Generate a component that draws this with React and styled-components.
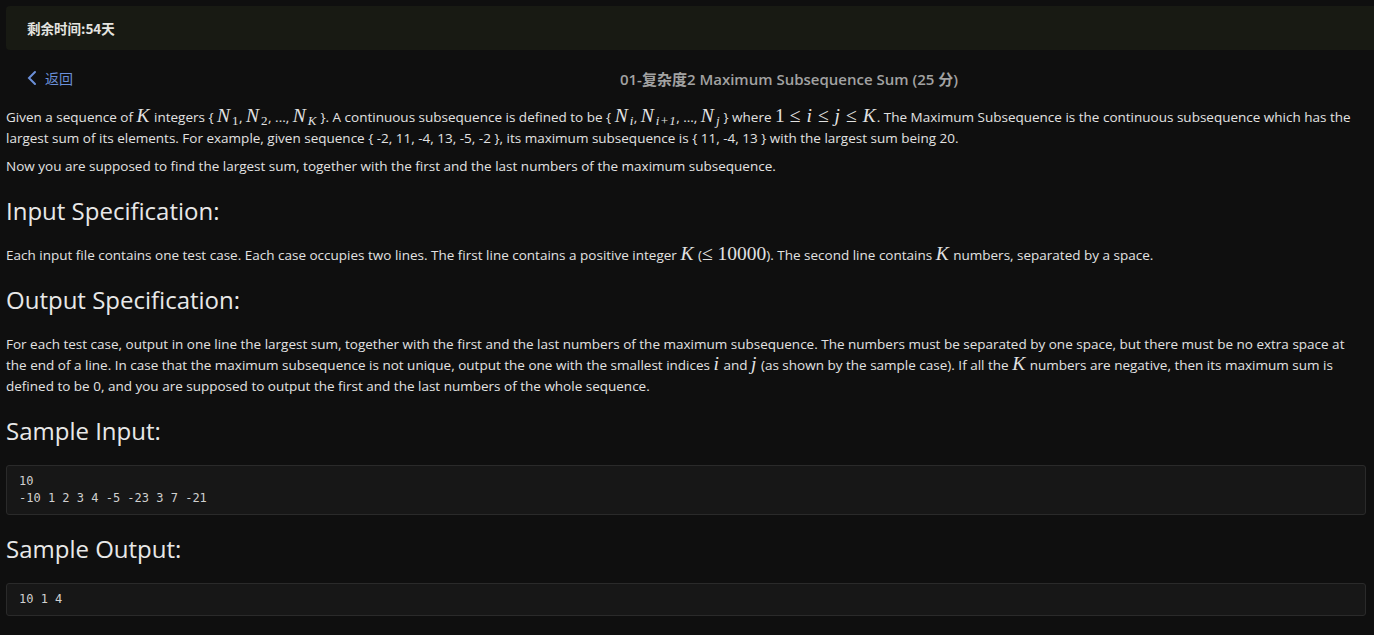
import React from "react";
import styled, { createGlobalStyle } from "styled-components";

const Global = createGlobalStyle`
  html, body { margin: 0; padding: 0; background: #0f0f0f; }
  body { font-family: "Open Sans", "Noto Sans", "Noto Sans CJK SC", sans-serif; color: #e2e2e2; }
  * { box-sizing: border-box; }
`;

const Page = styled.div`
  min-height: 635px;
  padding: 6px 0 20px 6px;
`;

const TopBar = styled.div`
  height: 44px;
  background: #181a13;
  border-radius: 4px 0 0 4px;
  display: flex;
  align-items: center;
  padding-left: 21px;
  font-size: 13.5px;
  font-weight: 600;
  color: #e4e4e0;
  font-family: "Noto Sans CJK SC", "Open Sans", sans-serif;
`;

const Content = styled.div`
  padding-right: 8px;
`;

const Header = styled.div`
  display: grid;
  grid-template-columns: 206px 1fr;
  align-items: center;
  height: 57px;
  padding-bottom: 1px;
`;

const Back = styled.a`
  display: flex;
  align-items: center;
  gap: 8px;
  padding-left: 21px;
  color: #6b8fd8;
  font-size: 14px;
  font-family: "Noto Sans CJK SC", sans-serif;
  text-decoration: none;
  cursor: pointer;
`;

const Title = styled.h1`
  margin: 0;
  text-align: center;
  font-size: 15px;
  font-weight: 600;
  color: #a2a2a2;
  font-family: "Open Sans", "Noto Sans CJK SC", sans-serif;
`;

const P = styled.p`
  margin: 0 0 7px;
  font-size: 13.5px;
  line-height: 21px;
`;

const H2 = styled.h2`
  margin: 17px 0 17px;
  font-size: 24px;
  line-height: 34px;
  font-weight: 400;
  color: #e8e8e8;
`;

const M = styled.span`
  font-family: "Liberation Serif", "DejaVu Serif", serif;
  font-style: ${(p) => (p.$up ? "normal" : "italic")};
  font-size: 19.5px;
  letter-spacing: ${(p) => (p.$up ? "0" : "1px")};
  line-height: 0;
`;

const Rel = styled.span`
  font-style: normal;
  margin: 0 5px;
`;

const Sub = styled.sub`
  font-size: 13px;
  letter-spacing: 0.5px;
  font-style: ${(p) => (p.$up ? "normal" : "italic")};
  line-height: 0;
  vertical-align: -3px;
  margin-left: 1px;
`;

const Code = styled.pre`
  margin: 0;
  background: #171717;
  border: 1px solid #2a2a2a;
  border-radius: 3px;
  padding: 7px 12px 7px;
  font-family: "DejaVu Sans Mono", "Liberation Mono", monospace;
  font-size: 12px;
  line-height: 17px;
  color: #d0d0d0;
`;

const N = ({ s, up }) => (
  <M>
    N<Sub $up={up}>{s}</Sub>
  </M>
);

export default function App() {
  return (
    <Page>
      <Global />
      <TopBar>剩余时间:54天</TopBar>
      <Content>
        <Header>
          <Back>
            <svg width="10" height="16" viewBox="0 0 10 16">
              <path d="M8 2 L2 8 L8 14" stroke="#6b8fd8" strokeWidth="2" fill="none" strokeLinecap="round" />
            </svg>
            返回
          </Back>
          <Title>01-复杂度2 Maximum Subsequence Sum (25 分)</Title>
        </Header>
        <P>
          Given a sequence of <M>K</M> integers {"{"} <N s="1" up />, <N s="2" up />, ..., <N s="K" /> {"}"}. A continuous
          subsequence is defined to be {"{"} <N s="i" />, <N s="i+1" />, ..., <N s="j" /> {"}"} where{" "}
          <M>
            <M $up>1</M>
            <Rel>≤</Rel>i<Rel>≤</Rel>j<Rel>≤</Rel>K
          </M>
          . The Maximum Subsequence is the continuous subsequence which has the largest sum of its elements. For example,
          given sequence {"{"} -2, 11, -4, 13, -5, -2 {"}"}, its maximum subsequence is {"{"} 11, -4, 13 {"}"} with the
          largest sum being 20.
        </P>
        <P>
          Now you are supposed to find the largest sum, together with the first and the last numbers of the maximum
          subsequence.
        </P>
        <H2>Input Specification:</H2>
        <P>
          Each input file contains one test case. Each case occupies two lines. The first line contains a positive integer{" "}
          <M>K</M> (<M $up>≤ 10000</M>). The second line contains <M>K</M> numbers, separated by a space.
        </P>
        <H2>Output Specification:</H2>
        <P>
          For each test case, output in one line the largest sum, together with the first and the last numbers of the
          maximum subsequence. The numbers must be separated by one space, but there must be no extra space at the end of
          a line. In case that the maximum subsequence is not unique, output the one with the smallest indices <M>i</M> and{" "}
          <M>j</M> (as shown by the sample case). If all the <M>K</M> numbers are negative, then its maximum sum is defined
          to be 0, and you are supposed to output the first and the last numbers of the whole sequence.
        </P>
        <H2>Sample Input:</H2>
        <Code>{"10\n-10 1 2 3 4 -5 -23 3 7 -21"}</Code>
        <H2>Sample Output:</H2>
        <Code>{"10 1 4"}</Code>
      </Content>
    </Page>
  );
}
